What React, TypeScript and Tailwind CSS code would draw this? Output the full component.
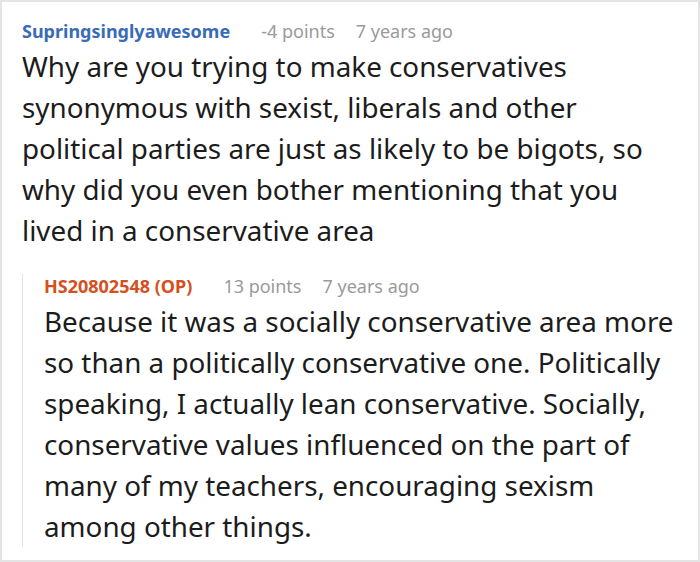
const font = { fontFamily: '"Noto Sans", "Open Sans", sans-serif' };

type Meta = { author: string; op?: boolean; points: string; age: string };

function CommentHeader({ author, op, points, age }: Meta) {
  return (
    <div className="flex items-baseline text-[18px] leading-[24px]">
      <span className={op ? 'font-bold text-[#d4501c]' : 'font-bold text-[#3a6bb7]'}>
        {author}
        {op && ' (OP)'}
      </span>
      <span className="ml-[31px] text-[#9a9a9a]">{points}</span>
      <span className="ml-[21px] text-[#9a9a9a]">{age}</span>
    </div>
  );
}

export default function App() {
  return (
    <div style={font} className="h-[562px] w-[700px] overflow-hidden border-2 border-[#e4e4e4] bg-white">
      <div className="pl-[20px] pr-2 pt-[17px]">
        <CommentHeader author="Supringsinglyawesome" points="-4 points" age="7 years ago" />
        <p className="mr-[40px] mt-[3px] text-[27.8px] leading-[41px] text-[#1c1c1c]">
          Why are you trying to make conservatives synonymous with sexist, liberals and other
          political parties are just as likely to be bigots, so why did you even bother
          mentioning that you lived in a conservative area
        </p>

        <div className="mt-[32px] border-l border-[#e2e2e2] pl-[21px]">
          <div className="-mt-[9px]">
            <CommentHeader author="HS20802548" op points="13 points" age="7 years ago" />
          </div>
          <p className="mt-[3px] text-[27.8px] leading-[41px] text-[#1c1c1c]">
            Because it was a socially conservative area more so than a politically conservative
            one. Politically speaking, I actually lean conservative. Socially, conservative values
            influenced on the part of many of my teachers, encouraging sexism among other things.
          </p>
        </div>
      </div>
    </div>
  );
}
